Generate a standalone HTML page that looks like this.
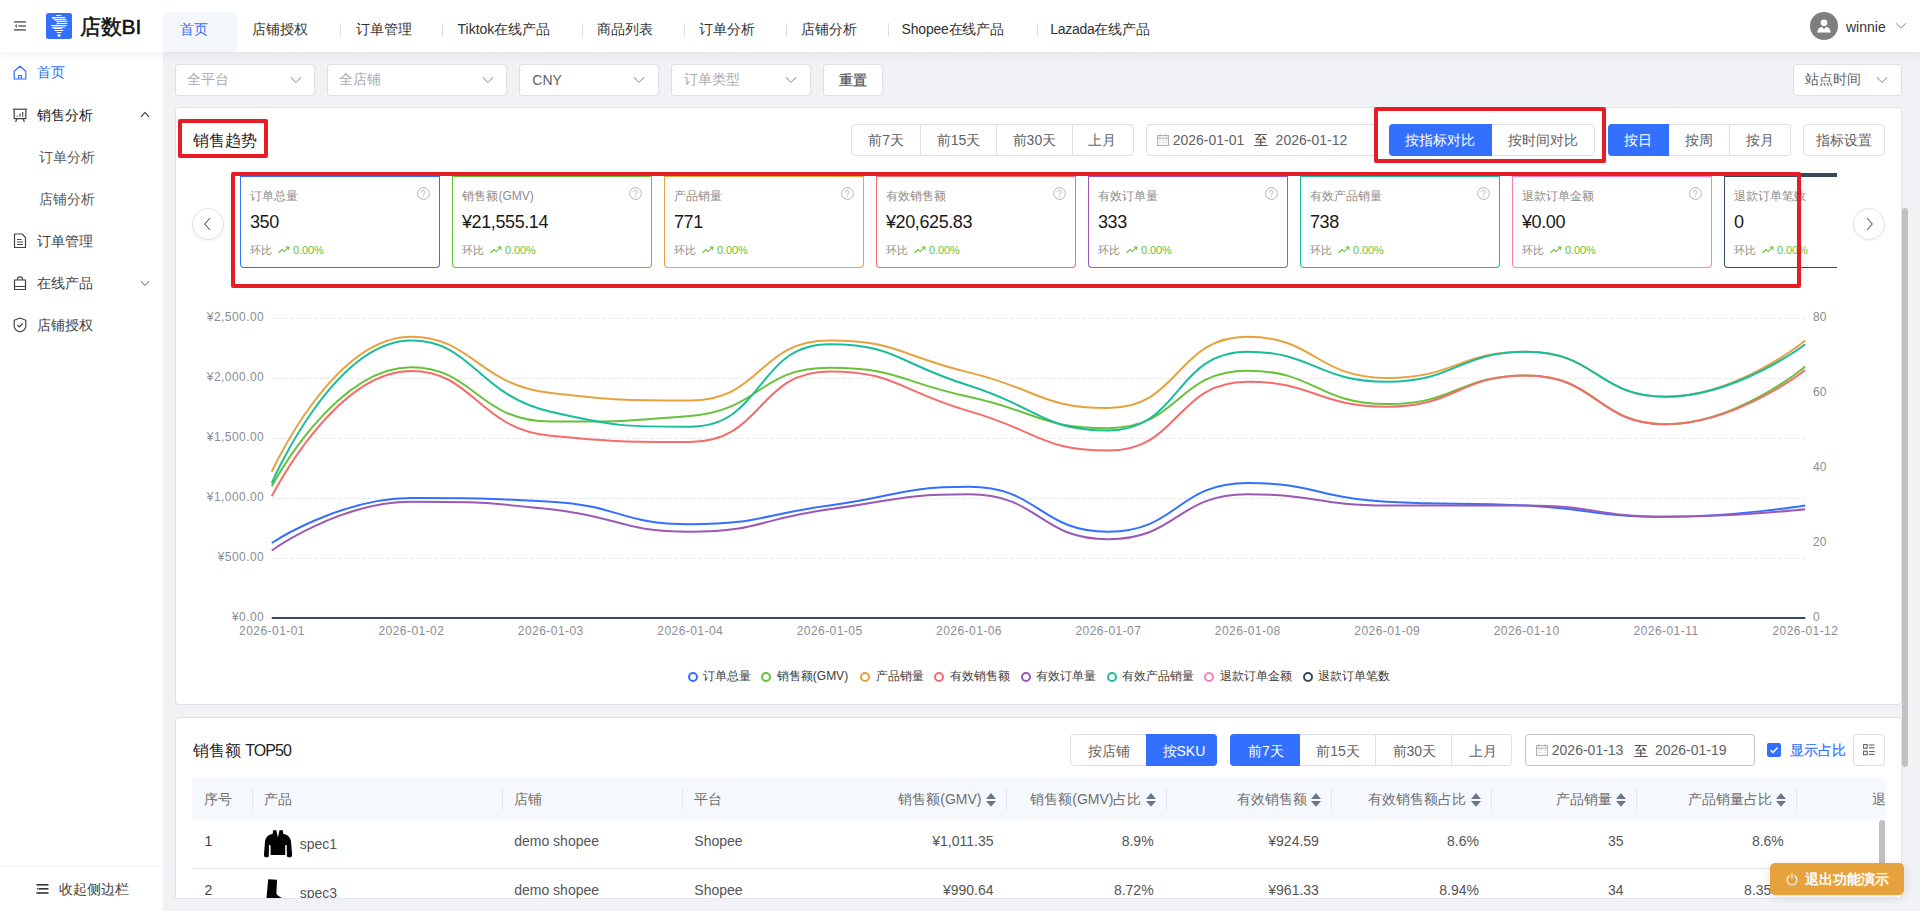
<!DOCTYPE html>
<html lang="zh"><head><meta charset="utf-8"><title>店数BI</title>
<style>
*{box-sizing:border-box;margin:0;padding:0}
html,body{width:1920px;height:911px;overflow:hidden}
body{background:#f0f2f5;font-family:"Liberation Sans",sans-serif;font-size:14px;color:#303133;position:relative}
.a{position:absolute;white-space:nowrap;line-height:20px}
.f12{font-size:12px}.f16{font-size:16px}
.box{position:absolute;background:#fff;border:1px solid #dcdfe6;border-radius:4px}
.red{position:absolute;border:4px solid #e81c24;border-radius:2px}
.sep{position:absolute;width:1px;background:#dcdfe6}
.ph{color:#a8abb2}
.g{color:#606266}
.chev{position:absolute}
svg{position:absolute;overflow:visible}
</style></head><body>

<!-- ============ HEADER ============ -->
<div style="position:absolute;left:0;top:0;width:1920px;height:52px;background:#fff;box-shadow:0 2px 10px rgba(0,0,0,.065);z-index:3">
  <svg style="left:13px;top:20px" width="14" height="12" viewBox="0 0 14 12">
    <rect x="1" y="1.05" width="12" height="1.7" fill="#737373"/>
    <rect x="5.3" y="5.15" width="7.6" height="1.7" fill="#737373"/>
    <path d="M1.6 6 L4 4.1 L4 7.9Z" fill="#737373"/>
    <rect x="1" y="9.05" width="12" height="1.7" fill="#737373"/>
  </svg>
  <svg style="left:46px;top:13px" width="26" height="26" viewBox="0 0 26 26">
    <rect width="26" height="26" rx="2.5" fill="#3370ff"/>
    <g stroke="#fff" stroke-width="1.05" stroke-linecap="round">
      <path d="M10.3 2.5H15"/><path d="M6.3 4.6H19"/><path d="M8.3 6.6H20"/><path d="M11.6 8.5H21"/>
      <path d="M12 10.5H21"/><path d="M5.4 12.5H20.5"/><path d="M6.4 14.2H18.5"/><path d="M7.8 15.5H15.7"/>
      <path d="M9.2 17.5H17"/><path d="M11.2 19.5H15"/>
    </g>
    <path d="M6.3 4.6 L11.6 8.5 L11 11.5" stroke="#fff" stroke-width="0.9" fill="none"/>
    <path d="M11.6 21.2H14.6L14.2 23.8H12Z" fill="#fff"/>
  </svg>
  <div class="a" style="left:80px;top:14.5px;font-size:21px;line-height:24px;-webkit-text-stroke:0.5px #111;color:#111;letter-spacing:-0.2px">店数BI</div>

  <div style="position:absolute;left:163px;top:12px;width:74px;height:40px;background:#f4f7fc;border-radius:6px 6px 0 0"></div>
  <div class="a" style="left:179.5px;top:18.5px;color:#3370ff">首页</div>
  <div class="a" style="left:252.3px;top:19px;color:#333">店铺授权</div>
  <div class="sep" style="left:340px;top:23px;height:14px"></div>
  <div class="a" style="left:355.5px;top:19px;color:#333">订单管理</div>
  <div class="sep" style="left:442px;top:23px;height:14px"></div>
  <div class="a" style="left:457.5px;top:19px;color:#333">Tiktok在线产品</div>
  <div class="sep" style="left:581.5px;top:23px;height:14px"></div>
  <div class="a" style="left:597px;top:19px;color:#333">商品列表</div>
  <div class="sep" style="left:683.5px;top:23px;height:14px"></div>
  <div class="a" style="left:698.5px;top:19px;color:#333">订单分析</div>
  <div class="sep" style="left:785.5px;top:23px;height:14px"></div>
  <div class="a" style="left:800.5px;top:19px;color:#333">店铺分析</div>
  <div class="sep" style="left:887.5px;top:23px;height:14px"></div>
  <div class="a" style="left:901.6px;top:19px;color:#333;letter-spacing:-0.2px">Shopee在线产品</div>
  <div class="sep" style="left:1036.5px;top:23px;height:14px"></div>
  <div class="a" style="left:1050.3px;top:19px;color:#333;letter-spacing:-0.3px">Lazada在线产品</div>

  <svg style="left:1810px;top:12px" width="28" height="28" viewBox="0 0 28 28">
    <circle cx="14" cy="14" r="14" fill="#7f7f7f"/>
    <circle cx="14" cy="10.8" r="3.3" fill="#fff"/>
    <path d="M7.3 20.5 C7.6 16.6 10 15 12.2 15 L14 17.2 L15.8 15 C18 15 20.4 16.6 20.7 20.5Z" fill="#fff"/>
  </svg>
  <div class="a" style="left:1846px;top:17px;color:#333">winnie</div>
  <svg style="left:1895px;top:21.7px" width="12" height="8" viewBox="0 0 12 8"><path d="M1 1.2 L6 6.2 L11 1.2" stroke="#80858f" stroke-width="1" fill="none"/></svg>
</div>

<!-- ============ SIDEBAR ============ -->
<div style="position:absolute;left:0;top:52px;width:163px;height:859px;background:#fff;z-index:2">
</div>
<div style="position:absolute;left:0;top:0;width:163px;height:911px;z-index:4">
  <svg style="left:13px;top:65px" width="14" height="15" viewBox="0 0 14 15">
    <path d="M1.2 6.3 L7 1.2 L12.8 6.3 V14 H1.2Z" stroke="#3370ff" stroke-width="1.2" fill="none" stroke-linejoin="round"/>
    <path d="M5.6 14 V10.5 H8.4 V14" stroke="#3370ff" stroke-width="1.2" fill="none"/>
  </svg>
  <div class="a" style="left:37px;top:62px;color:#3370ff">首页</div>

  <svg style="left:12px;top:108px" width="16" height="15" viewBox="0 0 16 15">
    <path d="M1 1.2 H15" stroke="#444" stroke-width="1.2"/>
    <path d="M2.2 1.2 V10.6 H13.8 V1.2" stroke="#444" stroke-width="1.2" fill="none"/>
    <path d="M5.3 7.5 V8.8 M8 5.5 V8.8 M10.7 4 V8.8" stroke="#444" stroke-width="1.1"/>
    <path d="M5 10.6 L3.6 14 M11 10.6 L12.4 14" stroke="#444" stroke-width="1.2"/>
  </svg>
  <div class="a" style="left:36.8px;top:105px;color:#222">销售分析</div>
  <svg style="left:140px;top:111px" width="10" height="7" viewBox="0 0 10 7"><path d="M1 5.8 L5 1.5 L9 5.8" stroke="#333" stroke-width="1.1" fill="none"/></svg>
  <div class="a" style="left:38.8px;top:147px;color:#595959">订单分析</div>
  <div class="a" style="left:38.8px;top:189px;color:#595959">店铺分析</div>

  <svg style="left:13px;top:233px" width="14" height="16" viewBox="0 0 14 16">
    <path d="M1.5 1 H9 L12.5 4.5 V14.5 H1.5Z" stroke="#444" stroke-width="1.2" fill="none" stroke-linejoin="round"/>
    <path d="M4 6.5 H8.5 M4 9 H10 M4 11.5 H10" stroke="#444" stroke-width="1.1"/>
  </svg>
  <div class="a" style="left:36.8px;top:231px;color:#444">订单管理</div>

  <svg style="left:13px;top:275px" width="14" height="16" viewBox="0 0 14 16">
    <path d="M1.5 5 H12.5 V14.5 H1.5Z M1.5 11.5 H12.5" stroke="#444" stroke-width="1.2" fill="none"/>
    <path d="M4.5 5 V3.5 C4.5 1.2 9.5 1.2 9.5 3.5 V5" stroke="#444" stroke-width="1.2" fill="none"/>
  </svg>
  <div class="a" style="left:36.8px;top:273px;color:#444">在线产品</div>
  <svg style="left:140px;top:280px" width="10" height="7" viewBox="0 0 10 7"><path d="M1 1.2 L5 5.5 L9 1.2" stroke="#888" stroke-width="1.1" fill="none"/></svg>

  <svg style="left:13px;top:317px" width="14" height="16" viewBox="0 0 14 16">
    <path d="M7 1 L12.8 3.2 V9 C12.8 12 10 14 7 15 C4 14 1.2 12 1.2 9 V3.2Z" stroke="#444" stroke-width="1.2" fill="none" stroke-linejoin="round"/>
    <path d="M4.5 8 L6.4 9.9 L9.7 6.5" stroke="#444" stroke-width="1.2" fill="none"/>
  </svg>
  <div class="a" style="left:36.8px;top:315px;color:#444">店铺授权</div>

  <div style="position:absolute;left:0;top:866px;width:163px;height:1px;background:#eceef2"></div>
  <svg style="left:36px;top:883px" width="13" height="12" viewBox="0 0 13 12">
    <rect x="0.5" y="1" width="12" height="1.6" fill="#333"/>
    <rect x="3" y="5" width="9.5" height="1.6" fill="#333"/>
    <path d="M0.5 5.8 L2.5 4.5 L2.5 7.1Z" fill="#333"/>
    <rect x="0.5" y="9.2" width="12" height="1.6" fill="#333"/>
  </svg>
  <div class="a" style="left:59.2px;top:878.8px;color:#444">收起侧边栏</div>
</div>

<!-- ============ FILTERS ============ -->
<div class="box" style="left:175px;top:64px;width:140px;height:32px"></div>
<div class="a ph" style="left:187.2px;top:69px">全平台</div>
<svg class="chev" style="left:290px;top:76px" width="12" height="8" viewBox="0 0 12 8"><path d="M1 1.5 L6 6.3 L11 1.5" stroke="#a8abb2" stroke-width="1.1" fill="none"/></svg>
<div class="box" style="left:327px;top:64px;width:180px;height:32px"></div>
<div class="a ph" style="left:339.4px;top:69px">全店铺</div>
<svg class="chev" style="left:482px;top:76px" width="12" height="8" viewBox="0 0 12 8"><path d="M1 1.5 L6 6.3 L11 1.5" stroke="#a8abb2" stroke-width="1.1" fill="none"/></svg>
<div class="box" style="left:519px;top:64px;width:140px;height:32px"></div>
<div class="a g" style="left:532.3px;top:70px">CNY</div>
<svg class="chev" style="left:633px;top:76px" width="12" height="8" viewBox="0 0 12 8"><path d="M1 1.5 L6 6.3 L11 1.5" stroke="#a8abb2" stroke-width="1.1" fill="none"/></svg>
<div class="box" style="left:671px;top:64px;width:140px;height:32px"></div>
<div class="a ph" style="left:684.4px;top:69px">订单类型</div>
<svg class="chev" style="left:785px;top:76px" width="12" height="8" viewBox="0 0 12 8"><path d="M1 1.5 L6 6.3 L11 1.5" stroke="#a8abb2" stroke-width="1.1" fill="none"/></svg>
<div class="box" style="left:823px;top:64px;width:60px;height:32px"></div>
<div class="a" style="left:839.3px;top:70px;color:#555;-webkit-text-stroke:0.25px #555">重置</div>

<div class="box" style="left:1793px;top:64px;width:109px;height:32px"></div>
<div class="a g" style="left:1805px;top:69px">站点时间</div>
<svg class="chev" style="left:1876px;top:76px" width="12" height="8" viewBox="0 0 12 8"><path d="M1 1.5 L6 6.3 L11 1.5" stroke="#a8abb2" stroke-width="1.1" fill="none"/></svg>

<!-- ============ CARD 1 ============ -->
<div class="box" style="left:175px;top:107px;width:1727px;height:598px;border-color:#dfe2e8"></div>
<div class="red" style="left:178px;top:119px;width:90px;height:39px"></div>
<div class="a f16" style="left:192.7px;top:131px;color:#1f1f1f">销售趋势</div>

<div class="box" style="left:851px;top:124px;width:283px;height:32px"></div>
<div class="sep" style="left:920px;top:124px;height:32px"></div>
<div class="sep" style="left:996px;top:124px;height:32px"></div>
<div class="sep" style="left:1072px;top:124px;height:32px"></div>
<div class="a g" style="left:868.2px;top:129.9px">前7天</div>
<div class="a g" style="left:936.8px;top:129.9px">前15天</div>
<div class="a g" style="left:1012.6px;top:129.9px">前30天</div>
<div class="a g" style="left:1088.2px;top:129.9px">上月</div>

<div class="box" style="left:1146px;top:124px;width:232px;height:32px"></div>
<svg style="left:1157px;top:134px" width="12" height="12" viewBox="0 0 12 12">
  <rect x="0.6" y="1.6" width="10.8" height="9.8" stroke="#a8abb2" stroke-width="1" fill="none"/>
  <path d="M0.6 4.2H11.4" stroke="#a8abb2" stroke-width="1"/>
  <path d="M3 0.3V2.5M9 0.3V2.5" stroke="#a8abb2" stroke-width="1"/>
  <path d="M2.5 6.3h1M5.5 6.3h1M8.5 6.3h1M2.5 8.6h1M5.5 8.6h1M8.5 8.6h1" stroke="#a8abb2" stroke-width="0.9"/>
</svg>
<div class="a g" style="left:1172.7px;top:130px">2026-01-01</div>
<div class="a" style="left:1254px;top:129.9px;color:#303133">至</div>
<div class="a g" style="left:1275.6px;top:130px">2026-01-12</div>

<div class="red" style="left:1374px;top:107px;width:232px;height:56px"></div>
<div class="box" style="left:1389px;top:124px;width:206px;height:32px"></div>
<div style="position:absolute;left:1389px;top:124px;width:103px;height:32px;background:#3370ff;border-radius:4px 0 0 4px"></div>
<div class="a" style="left:1405.4px;top:129.9px;color:#fff">按指标对比</div>
<div class="a g" style="left:1508.3px;top:129.9px">按时间对比</div>

<div class="box" style="left:1608px;top:124px;width:183px;height:32px"></div>
<div style="position:absolute;left:1608px;top:124px;width:61px;height:32px;background:#3370ff;border-radius:4px 0 0 4px"></div>
<div class="sep" style="left:1729px;top:124px;height:32px"></div>
<div class="a" style="left:1623.8px;top:129.9px;color:#fff">按日</div>
<div class="a g" style="left:1685px;top:129.9px">按周</div>
<div class="a g" style="left:1746.3px;top:129.9px">按月</div>

<div class="box" style="left:1803px;top:124px;width:82px;height:32px"></div>
<div class="a g" style="left:1816px;top:129.9px">指标设置</div>

<!-- carousel -->
<div style="position:absolute;left:192px;top:208px;width:32px;height:32px;border-radius:50%;border:1px solid #dfe3ea;background:#fff;box-shadow:0 1px 2px rgba(0,0,0,.06)"></div>
<svg style="left:202px;top:216px" width="10" height="16" viewBox="0 0 10 16"><path d="M8 2 L2.8 8 L8 14" stroke="#56657a" stroke-width="1.1" fill="none"/></svg>
<div style="position:absolute;left:1853px;top:208px;width:32px;height:32px;border-radius:50%;border:1px solid #dfe3ea;background:#fff;box-shadow:0 1px 2px rgba(0,0,0,.06)"></div>
<svg style="left:1865px;top:216px" width="10" height="16" viewBox="0 0 10 16"><path d="M2 2 L7.2 8 L2 14" stroke="#56657a" stroke-width="1.1" fill="none"/></svg>

<div style="position:absolute;left:236px;top:172px;width:1601px;height:110px;overflow:hidden">
<div style="position:absolute;left:4px;top:1px;width:200px;height:95px;border:1px solid #3370ff;border-top:4px solid #3370ff;border-radius:0 0 4px 4px;background:#fff"></div>
<div class="a f12" style="left:14.4px;top:14px;color:#8c8c8c">订单总量</div>
<svg style="left:180.5px;top:15px" width="13" height="13" viewBox="0 0 13 13"><circle cx="6.5" cy="6.5" r="5.9" stroke="#b0b3b9" stroke-width="1" fill="none"/><path d="M4.7 5.1 C4.7 3.9 5.5 3.3 6.5 3.3 C7.5 3.3 8.3 3.9 8.3 4.9 C8.3 6.1 6.6 6.2 6.6 7.6" stroke="#b0b3b9" stroke-width="1" fill="none"/><circle cx="6.6" cy="9.4" r="0.6" fill="#b0b3b9"/></svg>
<div class="a" style="left:14px;top:39.5px;font-size:18px;color:#1a1a1a;letter-spacing:-0.4px">350</div>
<div class="a" style="left:14.4px;top:67.6px;font-size:11px;color:#8c8c8c">环比</div>
<svg style="left:42.4px;top:73.5px" width="12" height="8" viewBox="0 0 12 8"><path d="M0.5 7 L4 3.5 L6.3 5.6 L10.3 1.3 M7.6 1 H10.8 V4.2" stroke="#67c23a" stroke-width="1.1" fill="none"/></svg>
<div class="a" style="left:57px;top:68.19999999999999px;font-size:11px;color:#67c23a;letter-spacing:-0.1px">0.00%</div>
<div style="position:absolute;left:216px;top:1px;width:200px;height:95px;border:1px solid #67c23a;border-top:4px solid #67c23a;border-radius:0 0 4px 4px;background:#fff"></div>
<div class="a f12" style="left:226.4px;top:14px;color:#8c8c8c">销售额(GMV)</div>
<svg style="left:392.5px;top:15px" width="13" height="13" viewBox="0 0 13 13"><circle cx="6.5" cy="6.5" r="5.9" stroke="#b0b3b9" stroke-width="1" fill="none"/><path d="M4.7 5.1 C4.7 3.9 5.5 3.3 6.5 3.3 C7.5 3.3 8.3 3.9 8.3 4.9 C8.3 6.1 6.6 6.2 6.6 7.6" stroke="#b0b3b9" stroke-width="1" fill="none"/><circle cx="6.6" cy="9.4" r="0.6" fill="#b0b3b9"/></svg>
<div class="a" style="left:226px;top:39.5px;font-size:18px;color:#1a1a1a;letter-spacing:-0.4px">¥21,555.14</div>
<div class="a" style="left:226.4px;top:67.6px;font-size:11px;color:#8c8c8c">环比</div>
<svg style="left:254.4px;top:73.5px" width="12" height="8" viewBox="0 0 12 8"><path d="M0.5 7 L4 3.5 L6.3 5.6 L10.3 1.3 M7.6 1 H10.8 V4.2" stroke="#67c23a" stroke-width="1.1" fill="none"/></svg>
<div class="a" style="left:269px;top:68.19999999999999px;font-size:11px;color:#67c23a;letter-spacing:-0.1px">0.00%</div>
<div style="position:absolute;left:428px;top:1px;width:200px;height:95px;border:1px solid #e6a23c;border-top:4px solid #e6a23c;border-radius:0 0 4px 4px;background:#fff"></div>
<div class="a f12" style="left:438.4px;top:14px;color:#8c8c8c">产品销量</div>
<svg style="left:604.5px;top:15px" width="13" height="13" viewBox="0 0 13 13"><circle cx="6.5" cy="6.5" r="5.9" stroke="#b0b3b9" stroke-width="1" fill="none"/><path d="M4.7 5.1 C4.7 3.9 5.5 3.3 6.5 3.3 C7.5 3.3 8.3 3.9 8.3 4.9 C8.3 6.1 6.6 6.2 6.6 7.6" stroke="#b0b3b9" stroke-width="1" fill="none"/><circle cx="6.6" cy="9.4" r="0.6" fill="#b0b3b9"/></svg>
<div class="a" style="left:438px;top:39.5px;font-size:18px;color:#1a1a1a;letter-spacing:-0.4px">771</div>
<div class="a" style="left:438.4px;top:67.6px;font-size:11px;color:#8c8c8c">环比</div>
<svg style="left:466.4px;top:73.5px" width="12" height="8" viewBox="0 0 12 8"><path d="M0.5 7 L4 3.5 L6.3 5.6 L10.3 1.3 M7.6 1 H10.8 V4.2" stroke="#67c23a" stroke-width="1.1" fill="none"/></svg>
<div class="a" style="left:481px;top:68.19999999999999px;font-size:11px;color:#67c23a;letter-spacing:-0.1px">0.00%</div>
<div style="position:absolute;left:640px;top:1px;width:200px;height:95px;border:1px solid #f56c6c;border-top:4px solid #f56c6c;border-radius:0 0 4px 4px;background:#fff"></div>
<div class="a f12" style="left:650.4px;top:14px;color:#8c8c8c">有效销售额</div>
<svg style="left:816.5px;top:15px" width="13" height="13" viewBox="0 0 13 13"><circle cx="6.5" cy="6.5" r="5.9" stroke="#b0b3b9" stroke-width="1" fill="none"/><path d="M4.7 5.1 C4.7 3.9 5.5 3.3 6.5 3.3 C7.5 3.3 8.3 3.9 8.3 4.9 C8.3 6.1 6.6 6.2 6.6 7.6" stroke="#b0b3b9" stroke-width="1" fill="none"/><circle cx="6.6" cy="9.4" r="0.6" fill="#b0b3b9"/></svg>
<div class="a" style="left:650px;top:39.5px;font-size:18px;color:#1a1a1a;letter-spacing:-0.4px">¥20,625.83</div>
<div class="a" style="left:650.4px;top:67.6px;font-size:11px;color:#8c8c8c">环比</div>
<svg style="left:678.4px;top:73.5px" width="12" height="8" viewBox="0 0 12 8"><path d="M0.5 7 L4 3.5 L6.3 5.6 L10.3 1.3 M7.6 1 H10.8 V4.2" stroke="#67c23a" stroke-width="1.1" fill="none"/></svg>
<div class="a" style="left:693px;top:68.19999999999999px;font-size:11px;color:#67c23a;letter-spacing:-0.1px">0.00%</div>
<div style="position:absolute;left:852px;top:1px;width:200px;height:95px;border:1px solid #9b59b6;border-top:4px solid #9b59b6;border-radius:0 0 4px 4px;background:#fff"></div>
<div class="a f12" style="left:862.4px;top:14px;color:#8c8c8c">有效订单量</div>
<svg style="left:1028.5px;top:15px" width="13" height="13" viewBox="0 0 13 13"><circle cx="6.5" cy="6.5" r="5.9" stroke="#b0b3b9" stroke-width="1" fill="none"/><path d="M4.7 5.1 C4.7 3.9 5.5 3.3 6.5 3.3 C7.5 3.3 8.3 3.9 8.3 4.9 C8.3 6.1 6.6 6.2 6.6 7.6" stroke="#b0b3b9" stroke-width="1" fill="none"/><circle cx="6.6" cy="9.4" r="0.6" fill="#b0b3b9"/></svg>
<div class="a" style="left:862px;top:39.5px;font-size:18px;color:#1a1a1a;letter-spacing:-0.4px">333</div>
<div class="a" style="left:862.4px;top:67.6px;font-size:11px;color:#8c8c8c">环比</div>
<svg style="left:890.4px;top:73.5px" width="12" height="8" viewBox="0 0 12 8"><path d="M0.5 7 L4 3.5 L6.3 5.6 L10.3 1.3 M7.6 1 H10.8 V4.2" stroke="#67c23a" stroke-width="1.1" fill="none"/></svg>
<div class="a" style="left:905px;top:68.19999999999999px;font-size:11px;color:#67c23a;letter-spacing:-0.1px">0.00%</div>
<div style="position:absolute;left:1064px;top:1px;width:200px;height:95px;border:1px solid #1abc9c;border-top:4px solid #1abc9c;border-radius:0 0 4px 4px;background:#fff"></div>
<div class="a f12" style="left:1074.4px;top:14px;color:#8c8c8c">有效产品销量</div>
<svg style="left:1240.5px;top:15px" width="13" height="13" viewBox="0 0 13 13"><circle cx="6.5" cy="6.5" r="5.9" stroke="#b0b3b9" stroke-width="1" fill="none"/><path d="M4.7 5.1 C4.7 3.9 5.5 3.3 6.5 3.3 C7.5 3.3 8.3 3.9 8.3 4.9 C8.3 6.1 6.6 6.2 6.6 7.6" stroke="#b0b3b9" stroke-width="1" fill="none"/><circle cx="6.6" cy="9.4" r="0.6" fill="#b0b3b9"/></svg>
<div class="a" style="left:1074px;top:39.5px;font-size:18px;color:#1a1a1a;letter-spacing:-0.4px">738</div>
<div class="a" style="left:1074.4px;top:67.6px;font-size:11px;color:#8c8c8c">环比</div>
<svg style="left:1102.4px;top:73.5px" width="12" height="8" viewBox="0 0 12 8"><path d="M0.5 7 L4 3.5 L6.3 5.6 L10.3 1.3 M7.6 1 H10.8 V4.2" stroke="#67c23a" stroke-width="1.1" fill="none"/></svg>
<div class="a" style="left:1117px;top:68.19999999999999px;font-size:11px;color:#67c23a;letter-spacing:-0.1px">0.00%</div>
<div style="position:absolute;left:1276px;top:1px;width:200px;height:95px;border:1px solid #ff7eb9;border-top:4px solid #ff7eb9;border-radius:0 0 4px 4px;background:#fff"></div>
<div class="a f12" style="left:1286.4px;top:14px;color:#8c8c8c">退款订单金额</div>
<svg style="left:1452.5px;top:15px" width="13" height="13" viewBox="0 0 13 13"><circle cx="6.5" cy="6.5" r="5.9" stroke="#b0b3b9" stroke-width="1" fill="none"/><path d="M4.7 5.1 C4.7 3.9 5.5 3.3 6.5 3.3 C7.5 3.3 8.3 3.9 8.3 4.9 C8.3 6.1 6.6 6.2 6.6 7.6" stroke="#b0b3b9" stroke-width="1" fill="none"/><circle cx="6.6" cy="9.4" r="0.6" fill="#b0b3b9"/></svg>
<div class="a" style="left:1286px;top:39.5px;font-size:18px;color:#1a1a1a;letter-spacing:-0.4px">¥0.00</div>
<div class="a" style="left:1286.4px;top:67.6px;font-size:11px;color:#8c8c8c">环比</div>
<svg style="left:1314.4px;top:73.5px" width="12" height="8" viewBox="0 0 12 8"><path d="M0.5 7 L4 3.5 L6.3 5.6 L10.3 1.3 M7.6 1 H10.8 V4.2" stroke="#67c23a" stroke-width="1.1" fill="none"/></svg>
<div class="a" style="left:1329px;top:68.19999999999999px;font-size:11px;color:#67c23a;letter-spacing:-0.1px">0.00%</div>
<div style="position:absolute;left:1488px;top:1px;width:200px;height:95px;border:1px solid #34495e;border-top:4px solid #34495e;border-radius:0 0 4px 4px;background:#fff"></div>
<div class="a f12" style="left:1498.4px;top:14px;color:#8c8c8c">退款订单笔数</div>
<div class="a" style="left:1498px;top:39.5px;font-size:18px;color:#1a1a1a;letter-spacing:-0.4px">0</div>
<div class="a" style="left:1498.4px;top:67.6px;font-size:11px;color:#8c8c8c">环比</div>
<svg style="left:1526.4px;top:73.5px" width="12" height="8" viewBox="0 0 12 8"><path d="M0.5 7 L4 3.5 L6.3 5.6 L10.3 1.3 M7.6 1 H10.8 V4.2" stroke="#67c23a" stroke-width="1.1" fill="none"/></svg>
<div class="a" style="left:1541px;top:68.19999999999999px;font-size:11px;color:#67c23a;letter-spacing:-0.1px">0.00%</div>
</div>
<div class="red" style="left:231px;top:172px;width:1570px;height:116px"></div>

<svg style="left:0;top:0" width="1920" height="911" viewBox="0 0 1920 911">
<path d="M271.8 318.5H1805.2" stroke="#e8e8ea" stroke-width="1" stroke-dasharray="4 2"/>
<path d="M271.8 378.5H1805.2" stroke="#e8e8ea" stroke-width="1" stroke-dasharray="4 2"/>
<path d="M271.8 438.5H1805.2" stroke="#e8e8ea" stroke-width="1" stroke-dasharray="4 2"/>
<path d="M271.8 498.5H1805.2" stroke="#e8e8ea" stroke-width="1" stroke-dasharray="4 2"/>
<path d="M271.8 558.5H1805.2" stroke="#e8e8ea" stroke-width="1" stroke-dasharray="4 2"/>
<path d="M271.8 618H1805.2" stroke="#ff7eb9" stroke-width="2"/>
<path d="M271.8 618H1805.2" stroke="#34495e" stroke-width="2"/>
<g fill="none" stroke-width="2" stroke-linejoin="round">
<path d="M271.80 543.00C271.80 543.00 339.79 498.00 411.20 498.00C479.19 498.00 481.34 498.00 550.60 501.75C620.74 505.55 620.16 524.25 690.00 524.25C759.56 524.25 759.70 514.88 829.40 505.50C899.10 496.12 900.51 486.75 968.80 486.75C1039.91 486.75 1038.78 531.75 1108.20 531.75C1178.18 531.75 1176.20 483.00 1247.60 483.00C1315.60 483.00 1317.00 497.97 1387.00 501.75C1456.40 505.50 1456.80 501.76 1526.40 505.50C1596.20 509.26 1596.10 516.75 1665.80 516.75C1735.50 516.75 1805.20 505.50 1805.20 505.50" stroke="#3370ff"/>
<path d="M271.80 486.20C271.80 486.20 334.46 367.20 411.20 367.20C473.86 367.20 478.46 421.60 550.60 421.60C617.86 421.60 622.24 421.60 690.00 416.00C761.64 410.08 758.47 367.80 829.40 367.80C897.87 367.80 899.22 381.73 968.80 396.80C1038.62 411.93 1040.38 428.20 1108.20 428.20C1179.78 428.20 1176.14 370.70 1247.60 370.70C1315.54 370.70 1317.05 404.10 1387.00 404.10C1456.45 404.10 1458.00 375.50 1526.40 375.50C1597.40 375.50 1596.85 424.30 1665.80 424.30C1736.25 424.30 1805.20 366.50 1805.20 366.50" stroke="#67c23a"/>
<path d="M271.80 471.75C271.80 471.75 332.65 336.75 411.20 336.75C472.05 336.75 478.32 384.92 550.60 393.00C617.72 400.50 623.21 400.50 690.00 400.50C762.61 400.50 757.63 340.50 829.40 340.50C897.03 340.50 899.31 355.55 968.80 372.38C1038.71 389.30 1041.44 408.00 1108.20 408.00C1180.84 408.00 1175.32 336.75 1247.60 336.75C1314.72 336.75 1316.44 378.00 1387.00 378.00C1455.84 378.00 1457.82 351.75 1526.40 351.75C1597.22 351.75 1597.00 396.75 1665.80 396.75C1736.40 396.75 1805.20 340.50 1805.20 340.50" stroke="#e6a23c"/>
<path d="M271.80 496.30C271.80 496.30 334.60 371.00 411.20 371.00C474.00 371.00 477.54 428.76 550.60 435.70C616.94 442.00 624.24 442.00 690.00 442.00C763.64 442.00 757.08 371.40 829.40 371.40C896.48 371.40 899.09 391.30 968.80 411.10C1038.49 430.90 1040.96 450.60 1108.20 450.60C1180.36 450.60 1174.65 381.70 1247.60 381.70C1314.05 381.70 1317.60 406.70 1387.00 406.70C1457.00 406.70 1457.86 375.50 1526.40 375.50C1597.26 375.50 1596.55 424.30 1665.80 424.30C1735.95 424.30 1805.20 370.00 1805.20 370.00" stroke="#f56c6c"/>
<path d="M271.80 550.50C271.80 550.50 339.54 501.75 411.20 501.75C478.94 501.75 481.30 501.79 550.60 509.25C620.70 516.79 620.30 531.75 690.00 531.75C759.70 531.75 759.45 518.66 829.40 509.25C898.85 499.91 900.63 494.25 968.80 494.25C1040.03 494.25 1038.50 539.25 1108.20 539.25C1177.90 539.25 1176.29 494.25 1247.60 494.25C1315.69 494.25 1317.19 505.50 1387.00 505.50C1456.59 505.50 1456.81 505.50 1526.40 505.50C1596.21 505.50 1596.04 516.75 1665.80 516.75C1735.44 516.75 1805.20 509.25 1805.20 509.25" stroke="#9b59b6"/>
<path d="M271.80 483.00C271.80 483.00 333.12 340.50 411.20 340.50C472.52 340.50 477.06 395.00 550.60 411.75C616.46 426.75 625.32 426.75 690.00 426.75C764.72 426.75 755.93 344.25 829.40 344.25C895.33 344.25 899.36 364.02 968.80 385.50C1038.76 407.14 1041.60 430.50 1108.20 430.50C1181.00 430.50 1173.87 351.75 1247.60 351.75C1313.27 351.75 1317.30 381.75 1387.00 381.75C1456.70 381.75 1457.64 351.75 1526.40 351.75C1597.04 351.75 1596.68 396.75 1665.80 396.75C1736.08 396.75 1805.20 344.25 1805.20 344.25" stroke="#1abc9c"/>
</g></svg>
<div class="a f12" style="right:1655.8px;top:307px;color:#8a8d93;letter-spacing:0.45px">¥2,500.00</div>
<div class="a f12" style="right:1655.8px;top:367px;color:#8a8d93;letter-spacing:0.45px">¥2,000.00</div>
<div class="a f12" style="right:1655.8px;top:427px;color:#8a8d93;letter-spacing:0.45px">¥1,500.00</div>
<div class="a f12" style="right:1655.8px;top:487px;color:#8a8d93;letter-spacing:0.45px">¥1,000.00</div>
<div class="a f12" style="right:1655.8px;top:547px;color:#8a8d93;letter-spacing:0.45px">¥500.00</div>
<div class="a f12" style="right:1655.8px;top:607px;color:#8a8d93;letter-spacing:0.45px">¥0.00</div>
<div class="a f12" style="left:1813px;top:307px;color:#8a8d93">80</div>
<div class="a f12" style="left:1813px;top:382px;color:#8a8d93">60</div>
<div class="a f12" style="left:1813px;top:457px;color:#8a8d93">40</div>
<div class="a f12" style="left:1813px;top:532px;color:#8a8d93">20</div>
<div class="a f12" style="left:1813px;top:607px;color:#8a8d93">0</div>
<div class="a f12" style="left:231.8px;width:80px;text-align:center;top:621px;color:#8a8d93;letter-spacing:0.45px;text-indent:0.45px">2026-01-01</div>
<div class="a f12" style="left:371.20000000000005px;width:80px;text-align:center;top:621px;color:#8a8d93;letter-spacing:0.45px;text-indent:0.45px">2026-01-02</div>
<div class="a f12" style="left:510.6px;width:80px;text-align:center;top:621px;color:#8a8d93;letter-spacing:0.45px;text-indent:0.45px">2026-01-03</div>
<div class="a f12" style="left:650.0px;width:80px;text-align:center;top:621px;color:#8a8d93;letter-spacing:0.45px;text-indent:0.45px">2026-01-04</div>
<div class="a f12" style="left:789.4000000000001px;width:80px;text-align:center;top:621px;color:#8a8d93;letter-spacing:0.45px;text-indent:0.45px">2026-01-05</div>
<div class="a f12" style="left:928.8px;width:80px;text-align:center;top:621px;color:#8a8d93;letter-spacing:0.45px;text-indent:0.45px">2026-01-06</div>
<div class="a f12" style="left:1068.2px;width:80px;text-align:center;top:621px;color:#8a8d93;letter-spacing:0.45px;text-indent:0.45px">2026-01-07</div>
<div class="a f12" style="left:1207.6000000000001px;width:80px;text-align:center;top:621px;color:#8a8d93;letter-spacing:0.45px;text-indent:0.45px">2026-01-08</div>
<div class="a f12" style="left:1347.0px;width:80px;text-align:center;top:621px;color:#8a8d93;letter-spacing:0.45px;text-indent:0.45px">2026-01-09</div>
<div class="a f12" style="left:1486.4px;width:80px;text-align:center;top:621px;color:#8a8d93;letter-spacing:0.45px;text-indent:0.45px">2026-01-10</div>
<div class="a f12" style="left:1625.8px;width:80px;text-align:center;top:621px;color:#8a8d93;letter-spacing:0.45px;text-indent:0.45px">2026-01-11</div>
<div class="a f12" style="left:1765.2px;width:80px;text-align:center;top:621px;color:#8a8d93;letter-spacing:0.45px;text-indent:0.45px">2026-01-12</div>
<svg style="left:687.7px;top:672px" width="10" height="10" viewBox="0 0 10 10"><circle cx="5" cy="5" r="4" stroke="#3370ff" stroke-width="2" fill="none"/></svg>
<div class="a f12" style="left:702.8px;top:666px;color:#3c3c3c">订单总量</div>
<svg style="left:761.2px;top:672px" width="10" height="10" viewBox="0 0 10 10"><circle cx="5" cy="5" r="4" stroke="#67c23a" stroke-width="2" fill="none"/></svg>
<div class="a f12" style="left:776.8px;top:666px;color:#3c3c3c">销售额(GMV)</div>
<svg style="left:860.2px;top:672px" width="10" height="10" viewBox="0 0 10 10"><circle cx="5" cy="5" r="4" stroke="#e6a23c" stroke-width="2" fill="none"/></svg>
<div class="a f12" style="left:875.8px;top:666px;color:#3c3c3c">产品销量</div>
<svg style="left:934.2px;top:672px" width="10" height="10" viewBox="0 0 10 10"><circle cx="5" cy="5" r="4" stroke="#f56c6c" stroke-width="2" fill="none"/></svg>
<div class="a f12" style="left:949.8px;top:666px;color:#3c3c3c">有效销售额</div>
<svg style="left:1020.6px;top:672px" width="10" height="10" viewBox="0 0 10 10"><circle cx="5" cy="5" r="4" stroke="#9b59b6" stroke-width="2" fill="none"/></svg>
<div class="a f12" style="left:1036px;top:666px;color:#3c3c3c">有效订单量</div>
<svg style="left:1106.5px;top:672px" width="10" height="10" viewBox="0 0 10 10"><circle cx="5" cy="5" r="4" stroke="#1abc9c" stroke-width="2" fill="none"/></svg>
<div class="a f12" style="left:1122.4px;top:666px;color:#3c3c3c">有效产品销量</div>
<svg style="left:1204.2px;top:672px" width="10" height="10" viewBox="0 0 10 10"><circle cx="5" cy="5" r="4" stroke="#ff7eb9" stroke-width="2" fill="none"/></svg>
<div class="a f12" style="left:1219.8px;top:666px;color:#3c3c3c">退款订单金额</div>
<svg style="left:1302.5px;top:672px" width="10" height="10" viewBox="0 0 10 10"><circle cx="5" cy="5" r="4" stroke="#34495e" stroke-width="2" fill="none"/></svg>
<div class="a f12" style="left:1318px;top:666px;color:#3c3c3c">退款订单笔数</div>
<!-- ============ CARD 2 ============ -->
<div class="box" style="left:175px;top:717px;width:1727px;height:200px;border-color:#dfe2e8"></div>
<div class="a f16" style="left:192.7px;top:741px;color:#1f1f1f">销售额 <span style="letter-spacing:-0.9px">TOP50</span></div>

<div class="box" style="left:1070px;top:734px;width:147px;height:32px"></div>
<div style="position:absolute;left:1146px;top:734px;width:71px;height:32px;background:#3370ff;border-radius:0 4px 4px 0"></div>
<div class="a g" style="left:1087.5px;top:741px">按店铺</div>
<div class="a" style="left:1162.5px;top:741px;color:#fff">按SKU</div>

<div class="box" style="left:1230px;top:734px;width:282px;height:32px"></div>
<div style="position:absolute;left:1230px;top:734px;width:70px;height:32px;background:#3370ff;border-radius:4px 0 0 4px"></div>
<div class="sep" style="left:1375px;top:734px;height:32px"></div>
<div class="sep" style="left:1451px;top:734px;height:32px"></div>
<div class="a" style="left:1248px;top:741px;color:#fff">前7天</div>
<div class="a g" style="left:1316.3px;top:741px">前15天</div>
<div class="a g" style="left:1392.5px;top:741px">前30天</div>
<div class="a g" style="left:1468.5px;top:741px">上月</div>

<div class="box" style="left:1525px;top:734px;width:230px;height:32px;border-color:#c0c4cc"></div>
<svg style="left:1536px;top:744px" width="12" height="12" viewBox="0 0 12 12">
  <rect x="0.6" y="1.6" width="10.8" height="9.8" stroke="#a8abb2" stroke-width="1" fill="none"/>
  <path d="M0.6 4.2H11.4" stroke="#a8abb2" stroke-width="1"/>
  <path d="M3 0.3V2.5M9 0.3V2.5" stroke="#a8abb2" stroke-width="1"/>
  <path d="M2.5 6.3h1M5.5 6.3h1M8.5 6.3h1M2.5 8.6h1M5.5 8.6h1M8.5 8.6h1" stroke="#a8abb2" stroke-width="0.9"/>
</svg>
<div class="a g" style="left:1551.8px;top:740px">2026-01-13</div>
<div class="a" style="left:1634px;top:740.5px;color:#303133">至</div>
<div class="a g" style="left:1654.9px;top:740px">2026-01-19</div>

<div style="position:absolute;left:1767px;top:743px;width:14px;height:14px;background:#3370ff;border-radius:2px"></div>
<svg style="left:1767px;top:743px" width="14" height="14" viewBox="0 0 14 14"><path d="M3.6 7.2 L6 9.4 L10.6 4.6" stroke="#fff" stroke-width="1.4" fill="none"/></svg>
<div class="a" style="left:1789.8px;top:739.7px;color:#3370ff;-webkit-text-stroke:0.2px #3370ff">显示占比</div>
<div class="box" style="left:1853px;top:734px;width:32px;height:32px"></div>
<svg style="left:1863px;top:744px" width="12" height="12" viewBox="0 0 12 12">
  <rect x="0.6" y="0.6" width="3.6" height="3.6" stroke="#555" stroke-width="1" fill="none"/>
  <rect x="0.6" y="7.2" width="3.6" height="3.6" stroke="#555" stroke-width="1" fill="none"/>
  <path d="M6 1H11.5M6 3.8H11.5M6 7.6H11.5M6 10.4H11.5" stroke="#555" stroke-width="1"/>
</svg>

<div style="position:absolute;left:192px;top:778px;width:1693px;height:42px;background:#f5f8fc"></div>
<div class="a" style="left:204.3px;top:789px;color:#707070">序号</div>
<div class="sep" style="left:252px;top:789px;height:21px;background:#e4e7ed"></div>
<div class="a" style="left:264.2px;top:789px;color:#707070">产品</div>
<div class="sep" style="left:502px;top:789px;height:21px;background:#e4e7ed"></div>
<div class="a" style="left:514.2px;top:789px;color:#707070">店铺</div>
<div class="sep" style="left:682px;top:789px;height:21px;background:#e4e7ed"></div>
<div class="a" style="left:694.3px;top:789px;color:#707070">平台</div>
<div class="sep" style="left:1006px;top:789px;height:21px;background:#e4e7ed"></div>
<div class="a" style="right:938.5px;top:789px;color:#707070">销售额(GMV)</div>
<svg style="left:986px;top:793px" width="10" height="14" viewBox="0 0 10 14"><path d="M5 0.1 L10 5.9 H0Z M0 7.9 H10 L5 13.8Z" fill="#6a7690"/></svg>
<div class="sep" style="left:1166px;top:789px;height:21px;background:#e4e7ed"></div>
<div class="a" style="right:778.5px;top:789px;color:#707070">销售额(GMV)占比</div>
<svg style="left:1146px;top:793px" width="10" height="14" viewBox="0 0 10 14"><path d="M5 0.1 L10 5.9 H0Z M0 7.9 H10 L5 13.8Z" fill="#6a7690"/></svg>
<div class="sep" style="left:1331px;top:789px;height:21px;background:#e4e7ed"></div>
<div class="a" style="right:613.5px;top:789px;color:#707070">有效销售额</div>
<svg style="left:1311px;top:793px" width="10" height="14" viewBox="0 0 10 14"><path d="M5 0.1 L10 5.9 H0Z M0 7.9 H10 L5 13.8Z" fill="#6a7690"/></svg>
<div class="sep" style="left:1491px;top:789px;height:21px;background:#e4e7ed"></div>
<div class="a" style="right:453.70000000000005px;top:789px;color:#707070">有效销售额占比</div>
<svg style="left:1470.8px;top:793px" width="10" height="14" viewBox="0 0 10 14"><path d="M5 0.1 L10 5.9 H0Z M0 7.9 H10 L5 13.8Z" fill="#6a7690"/></svg>
<div class="sep" style="left:1636px;top:789px;height:21px;background:#e4e7ed"></div>
<div class="a" style="right:308.5px;top:789px;color:#707070">产品销量</div>
<svg style="left:1616px;top:793px" width="10" height="14" viewBox="0 0 10 14"><path d="M5 0.1 L10 5.9 H0Z M0 7.9 H10 L5 13.8Z" fill="#6a7690"/></svg>
<div class="sep" style="left:1796px;top:789px;height:21px;background:#e4e7ed"></div>
<div class="a" style="right:148.5px;top:789px;color:#707070">产品销量占比</div>
<svg style="left:1776px;top:793px" width="10" height="14" viewBox="0 0 10 14"><path d="M5 0.1 L10 5.9 H0Z M0 7.9 H10 L5 13.8Z" fill="#6a7690"/></svg>
<div class="a" style="left:1872px;top:789px;color:#707070">退</div>
<div class="a" style="left:204.5px;top:831px;color:#444">1</div>
<div class="a" style="left:299.7px;top:834px;color:#555">spec1</div>
<div class="a" style="left:514.2px;top:831px;color:#555">demo shopee</div>
<div class="a" style="left:694.3px;top:831px;color:#555">Shopee</div>
<div class="a" style="right:926.5px;top:831px;color:#555">¥1,011.35</div>
<div class="a" style="right:766.4000000000001px;top:831px;color:#555">8.9%</div>
<div class="a" style="right:601.0999999999999px;top:831px;color:#555">¥924.59</div>
<div class="a" style="right:441px;top:831px;color:#555">8.6%</div>
<div class="a" style="right:296.5px;top:831px;color:#555">35</div>
<div class="a" style="right:136.20000000000005px;top:831px;color:#555">8.6%</div>
<div class="a" style="left:204.5px;top:879.5px;color:#444">2</div>
<div class="a" style="left:299.7px;top:882.5px;color:#555">spec3</div>
<div class="a" style="left:514.2px;top:879.5px;color:#555">demo shopee</div>
<div class="a" style="left:694.3px;top:879.5px;color:#555">Shopee</div>
<div class="a" style="right:926.5px;top:879.5px;color:#555">¥990.64</div>
<div class="a" style="right:766.4000000000001px;top:879.5px;color:#555">8.72%</div>
<div class="a" style="right:601.0999999999999px;top:879.5px;color:#555">¥961.33</div>
<div class="a" style="right:441px;top:879.5px;color:#555">8.94%</div>
<div class="a" style="right:296.5px;top:879.5px;color:#555">34</div>
<div class="a" style="right:136.20000000000005px;top:879.5px;color:#555">8.35%</div>
<div style="position:absolute;left:192px;top:868px;width:1687px;height:0;border-top:1px dotted #d4d7de"></div>
<svg style="left:258px;top:826px" width="40" height="73" viewBox="0 0 40 73"><path d="M15 4.2 H18.3 L19.9 11.4 L21.5 4.2 H24.8 L25.2 7.8 C29.5 8.6 32.2 11 33 15.5 L34.1 28.5 C34.1 30.5 33.3 31.3 31.8 31.3 H30.6 C29.5 31.3 28.9 30.6 28.9 29.5 L28.7 18.7 L27.2 19.5 V28.9 H12.6 V19.5 L11 18.7 L10.8 29.5 C10.8 30.6 10.2 31.3 9.1 31.3 H7.9 C6.6 31.3 6 30.5 6 28.5 L7 15.5 C7.8 11 10.5 8.6 14.8 7.8 Z" fill="#000"/><path d="M10.2 53.3 L19.1 53.8 L18.4 67 C18.5 69 21 70.5 24.8 72.4 L25 74 H8.3 Z" fill="#000"/></svg>
<div style="position:absolute;left:1879px;top:820px;width:6px;height:60px;background:#c1c1c1;border-radius:3px"></div>

<!-- bottom gray strip -->
<div style="position:absolute;left:163px;top:899px;width:1757px;height:12px;background:#f0f2f5"></div>
<div style="position:absolute;left:175px;top:898px;width:1727px;height:1px;background:#e4e7ed"></div>

<!-- page scrollbar -->
<div style="position:absolute;left:1902px;top:208px;width:6px;height:559px;background:#c1c1c1;border-radius:3px"></div>

<!-- floating button -->
<div style="position:absolute;left:1770px;top:863px;width:134px;height:32px;background:#e6a23c;border-radius:5px;box-shadow:0 2px 10px rgba(0,0,0,.12)"></div>
<svg style="left:1786px;top:873px" width="12" height="13" viewBox="0 0 12 13">
  <path d="M3.6 2.6 A5 5 0 1 0 8.4 2.6" stroke="#fff" stroke-width="1.2" fill="none"/>
  <path d="M6 0.6 V5.6" stroke="#fff" stroke-width="1.2"/>
</svg>
<div class="a" style="left:1805.4px;top:869px;color:#fff;font-weight:bold">退出功能演示</div>


</body></html>
